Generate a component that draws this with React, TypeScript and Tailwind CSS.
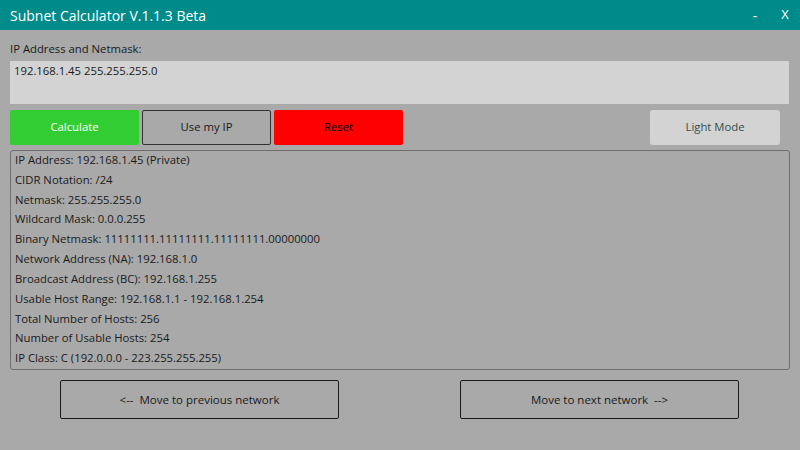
import React from "react";

const lines = [
  "IP Address: 192.168.1.45 (Private)",
  "CIDR Notation: /24",
  "Netmask: 255.255.255.0",
  "Wildcard Mask: 0.0.0.255",
  "Binary Netmask: 11111111.11111111.11111111.00000000",
  "Network Address (NA): 192.168.1.0",
  "Broadcast Address (BC): 192.168.1.255",
  "Usable Host Range: 192.168.1.1 - 192.168.1.254",
  "Total Number of Hosts: 256",
  "Number of Usable Hosts: 254",
  "IP Class: C (192.0.0.0 - 223.255.255.255)",
];

export default function App() {
  return (
    <div
      className="w-[800px] h-[450px] bg-[#a9a9a9] flex flex-col text-[11.3px] text-[#1a1a1a] overflow-hidden"
      style={{ fontFamily: '"Open Sans", "Noto Sans", sans-serif' }}
    >
      <div className="h-[30px] bg-[#008b8b] flex items-center pl-[10px] text-white text-[14px]">
        <span className="flex-1 text-[14px]">Subnet Calculator V.1.1.3 Beta</span>
        <span className="w-[30px] text-center">-</span>
        <span className="w-[30px] text-center text-[13px]">X</span>
      </div>
      <div className="flex flex-col px-[10px]">
        <div className="mt-[10px] h-[18px] leading-[18px]">IP Address and Netmask:</div>
        <div className="mt-[3px] h-[43px] w-[779px] bg-[#d3d3d3] px-[4px] pt-[1px] leading-[18px]">
          192.168.1.45 255.255.255.0
        </div>
        <div className="mt-[6px] flex h-[35px]">
          <div className="w-[129px] rounded-[2px] bg-[#32cd32] text-white flex items-center justify-center">
            Calculate
          </div>
          <div className="ml-[3px] w-[129px] rounded-[2px] border border-[#333] flex items-center justify-center">
            Use my IP
          </div>
          <div className="ml-[3px] w-[129px] rounded-[2px] bg-[#ff0000] text-black flex items-center justify-center">
            Reset
          </div>
          <div className="ml-[247px] w-[130px] rounded-[3px] bg-[#d3d3d3] text-[#2f4f4f] flex items-center justify-center">
            Light Mode
          </div>
        </div>
        <div className="mt-[5px] h-[220px] w-[780px] rounded-[3px] border border-[#6e6e6e] pl-[4px] flex flex-col">
          {lines.map((l) => (
            <div key={l} className="h-[20px] leading-[18px] whitespace-nowrap">
              {l}
            </div>
          ))}
        </div>
        <div className="mt-[10px] flex pl-[50px] text-[11.5px]">
          <div className="w-[279px] h-[39px] rounded-[2px] border-[1.5px] border-[#1a1a1a] flex items-center justify-center whitespace-pre">
            {"<--  Move to previous network"}
          </div>
          <div className="ml-[121px] w-[279px] h-[39px] rounded-[2px] border-[1.5px] border-[#1a1a1a] flex items-center justify-center whitespace-pre">
            {"Move to next network  -->"}
          </div>
        </div>
      </div>
    </div>
  );
}
